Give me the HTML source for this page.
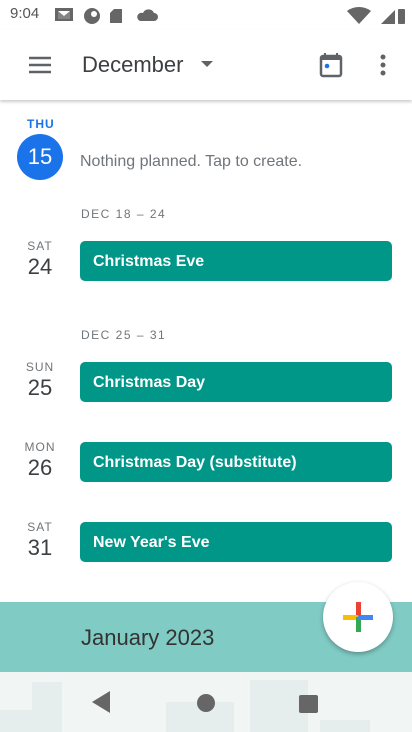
<!DOCTYPE html>
<html><head><meta charset="utf-8"><style>
*{margin:0;padding:0;box-sizing:border-box}
body{width:412px;height:732px;overflow:hidden;background:#fff;font-family:"Liberation Sans",sans-serif;position:relative}
.a{position:absolute}
.ev{position:absolute;left:80px;width:312px;height:40px;background:#009688;border-radius:5px;color:#fff;font-size:16px;font-weight:bold;padding-left:13px;line-height:42px}
.dw{position:absolute;width:80px;text-align:center;left:0;font-size:12px;color:#70757a;letter-spacing:1px}
.dn{position:absolute;width:80px;text-align:center;left:0;font-size:22px;color:#3c4043}
.wk{position:absolute;left:81px;font-size:12px;color:#70757a;letter-spacing:1.5px}
</style></head><body>
<div class="a" style="left:10px;top:5px;font-size:15px;color:#555">9:04</div>
<svg class="a" style="left:54px;top:6px" width="110" height="18"><rect x="1" y="2" width="18" height="13" fill="#666"/><path d="M4 5h12v8H4z" fill="#fff"/><path d="M4 5l6 5 6-5v8H4z" fill="#666" opacity=".8"/><circle cx="38" cy="10" r="8" fill="#666"/><circle cx="40" cy="8" r="3" fill="#fff"/><path d="M60 3h8v14h-12V7z" fill="#666"/><path d="M86 15h14a4 4 0 0 0 0-8 6 6 0 0 0-11 0 4 4 0 0 0-3 8z" fill="#666"/></svg>
<svg class="a" style="left:345px;top:6px" width="60" height="18"><path d="M2 5a20 20 0 0 1 24 0L14 18z" fill="#666"/><path d="M36 18L50 4v14z" fill="#666"/><rect x="53" y="3" width="7" height="15" rx="1" fill="#666"/></svg>
<div class="a" style="left:0;top:30px;width:412px;height:70px;background:#fff;box-shadow:0 2px 3px rgba(0,0,0,.2)"></div>
<svg class="a" style="left:28px;top:56px" width="24" height="18"><path d="M1 2h22M1 9h22M1 16h22" stroke="#5f6368" stroke-width="2.4"/></svg>
<div class="a" style="left:82px;top:52px;font-size:22px;color:#3c4043">December</div>
<svg class="a" style="left:200px;top:60px" width="14" height="8"><path d="M1 1h12L7 7z" fill="#5f6368"/></svg>
<svg class="a" style="left:319px;top:52px" width="24" height="26"><rect x="2" y="4" width="20" height="20" rx="2" fill="none" stroke="#5f6368" stroke-width="2.5"/><path d="M2 5h20v3H2z" fill="#5f6368"/><path d="M6 1v5M18 1v5" stroke="#5f6368" stroke-width="2"/><circle cx="8" cy="14" r="2.3" fill="#1a73e8"/></svg>
<svg class="a" style="left:379px;top:54px" width="8" height="24"><circle cx="4" cy="3" r="2.5" fill="#5f6368"/><circle cx="4" cy="11" r="2.5" fill="#5f6368"/><circle cx="4" cy="19" r="2.5" fill="#5f6368"/></svg>
<div class="a" style="left:27px;top:117px;font-size:12px;color:#1a73e8;letter-spacing:1px;font-weight:bold">THU</div>
<div class="a" style="left:17px;top:134px;width:46px;height:46px;border-radius:50%;background:#1a73e8;color:#fff;font-size:22px;text-align:center;line-height:46px">15</div>
<div class="a" style="left:80px;top:153px;font-size:16px;color:#70757a">Nothing planned. Tap to create.</div>
<div class="wk" style="top:207px">DEC 18 – 24</div>
<div class="dw" style="top:239px">SAT</div><div class="dn" style="top:254px">24</div>
<div class="ev" style="top:241px">Christmas Eve</div>
<div class="wk" style="top:328px">DEC 25 – 31</div>
<div class="dw" style="top:360px">SUN</div><div class="dn" style="top:375px">25</div>
<div class="ev" style="top:362px">Christmas Day</div>
<div class="dw" style="top:440px">MON</div><div class="dn" style="top:455px">26</div>
<div class="ev" style="top:442px">Christmas Day (substitute)</div>
<div class="dw" style="top:520px">SAT</div><div class="dn" style="top:535px">31</div>
<div class="ev" style="top:522px">New Year's Eve</div>
<div class="a" style="left:0;top:602px;width:412px;height:70px;background:#80cbc4"></div>
<div class="a" style="left:81px;top:625px;font-size:22px;color:#333">January 2023</div>
<div class="a" style="left:0;top:672px;width:412px;height:60px;background:#f1f6f5"></div>
<svg class="a" style="left:0;top:672px" width="412" height="60"><path d="M0 38h32V10h30v50H0zM166 30h68v30h-68zM250 8h58v52h-58zM320 48h50v12h-50z" fill="#e6eeed"/><path d="M92 30l18-11v22z" fill="#666"/><circle cx="206" cy="31" r="9" fill="#666"/><rect x="299" y="23" width="19" height="18" rx="2" fill="#666"/></svg>
<div class="a" style="left:323px;top:582px;width:70px;height:70px;border-radius:50%;background:#fff;box-shadow:0 2px 5px rgba(0,0,0,.3)"></div>
<svg class="a" style="left:341px;top:600px" width="34" height="34"><path d="M15 2h5v15h-5z" fill="#ea4335"/><path d="M2 15h15v5H2z" fill="#fbbc04"/><path d="M15 17h5v15h-5z" fill="#34a853"/><path d="M17 15h15v5H17z" fill="#4285f4"/></svg>
</body></html>
